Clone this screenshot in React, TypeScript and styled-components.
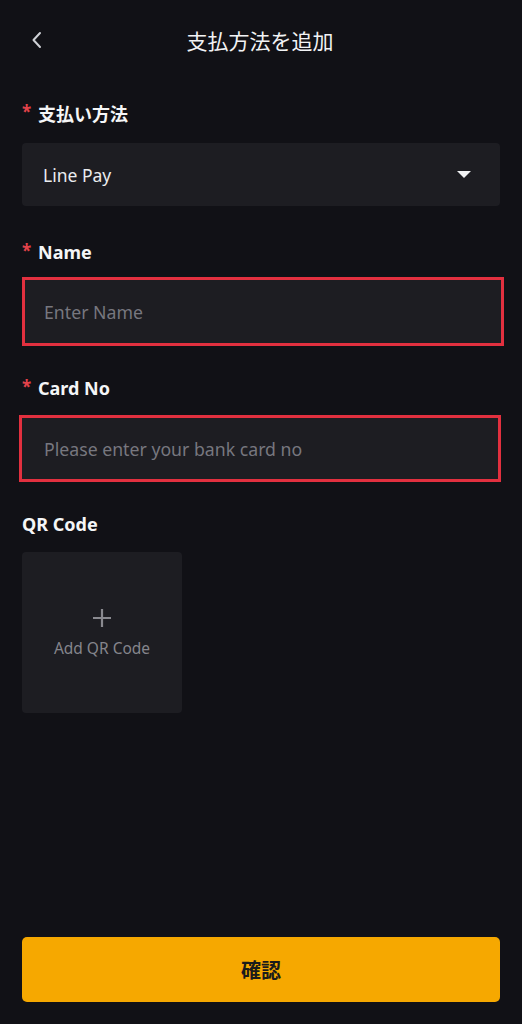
import React from "react";
import styled, { createGlobalStyle } from "styled-components";

const Global = createGlobalStyle`
  html, body { margin: 0; padding: 0; background: #111116; }
  body { font-family: "Noto Sans", "Noto Sans CJK JP", sans-serif; color: #eaecef; }
  * { box-sizing: border-box; }
`;

const Page = styled.div`
  min-height: 1024px;
  display: flex;
  flex-direction: column;
  padding: 0 22px 22px;
  background: #111116;
`;

const Header = styled.header`
  height: 80px;
  display: grid;
  grid-template-columns: 40px 1fr 40px;
  align-items: center;
  margin: 0 -22px;
  padding: 0 22px 0 30px;
`;

const BackButton = styled.button`
  background: none;
  border: none;
  padding: 0;
  display: flex;
  align-items: center;
  color: #cfd1d6;
  cursor: pointer;
`;

const Title = styled.h1`
  margin: 0;
  text-align: center;
  font-size: 21px;
  font-weight: 400;
  color: #f2f3f5;
  font-family: "Noto Sans CJK JP", sans-serif;
  padding-right: 10px;
`;

const Label = styled.div<{ $top: number; $bottom: number }>`
  display: flex;
  align-items: center;
  gap: 6px;
  height: 24px;
  margin-top: ${(p) => p.$top}px;
  margin-bottom: ${(p) => p.$bottom}px;
  font-size: 18px;
  font-weight: 700;
  color: #f5f6f7;
  font-family: "Noto Sans", "Noto Sans CJK JP", sans-serif;
`;

const Star = styled.span`
  color: #e2424a;
  font-size: 17px;
  font-weight: 700;
  line-height: 1;
  margin-top: -4px;
  width: 10px;
`;

const Select = styled.div`
  height: 63px;
  border-radius: 4px;
  background: #1d1d22;
  display: flex;
  align-items: center;
  justify-content: space-between;
  padding: 0 29px 0 21px;
  font-size: 17.5px;
  color: #eaecef;
`;

const Caret = styled.span`
  width: 0;
  height: 0;
  border-left: 7px solid transparent;
  border-right: 7px solid transparent;
  border-top: 7px solid #f0f1f3;
`;

const Field = styled.div<{ $height: number; $left: number; $right: number }>`
  height: ${(p) => p.$height}px;
  margin-left: ${(p) => p.$left}px;
  margin-right: ${(p) => p.$right}px;
  border: 3px solid #e2303f;
  background: #1d1d22;
  display: flex;
  align-items: center;
  padding-left: ${(p) => 20 - p.$left - 3}px;
`;

const Input = styled.input`
  flex: 1;
  background: transparent;
  border: none;
  outline: none;
  font-family: "Noto Sans", sans-serif;
  font-size: 17.7px;
  color: #eaecef;
  &::placeholder { color: #77777f; }
`;

const Upload = styled.button`
  width: 160px;
  height: 161px;
  border: none;
  border-radius: 4px;
  background: #1d1d22;
  display: flex;
  flex-direction: column;
  align-items: center;
  justify-content: center;
  gap: 9px;
  padding: 2px 0 0;
  color: #85858c;
  font-family: "Noto Sans", sans-serif;
  font-size: 15.5px;
`;

const Confirm = styled.button`
  margin-top: auto;
  height: 65px;
  border: none;
  border-radius: 5px;
  background: #f6a800;
  color: #1b1b1b;
  font-size: 20px;
  font-weight: 700;
  font-family: "Noto Sans CJK JP", sans-serif;
`;

export default function App() {
  return (
    <>
      <Global />
      <Page>
        <Header>
          <BackButton aria-label="back">
            <svg width="14" height="20" viewBox="0 0 14 20" fill="none">
              <path d="M10 3 L3.5 10 L10 17" stroke="currentColor" strokeWidth="2" strokeLinecap="round" strokeLinejoin="round" />
            </svg>
          </BackButton>
          <Title>支払方法を追加</Title>
          <span />
        </Header>

        <Label $top={21} $bottom={18}><Star>*</Star>支払い方法</Label>
        <Select>
          <span>Line Pay</span>
          <Caret />
        </Select>

        <Label $top={34} $bottom={13}><Star>*</Star>Name</Label>
        <Field $height={69} $left={0} $right={-4}>
          <Input placeholder="Enter Name" />
        </Field>

        <Label $top={30} $bottom={15}><Star>*</Star>Card No</Label>
        <Field $height={67} $left={-3} $right={-1}>
          <Input placeholder="Please enter your bank card no" />
        </Field>

        <Label $top={30} $bottom={16}>QR Code</Label>
        <Upload>
          <svg width="20" height="20" viewBox="0 0 20 20">
            <path d="M10 1 V19 M1 10 H19" stroke="#8a8a90" strokeWidth="2.2" />
          </svg>
          <span>Add QR Code</span>
        </Upload>

        <Confirm>確認</Confirm>
      </Page>
    </>
  );
}
